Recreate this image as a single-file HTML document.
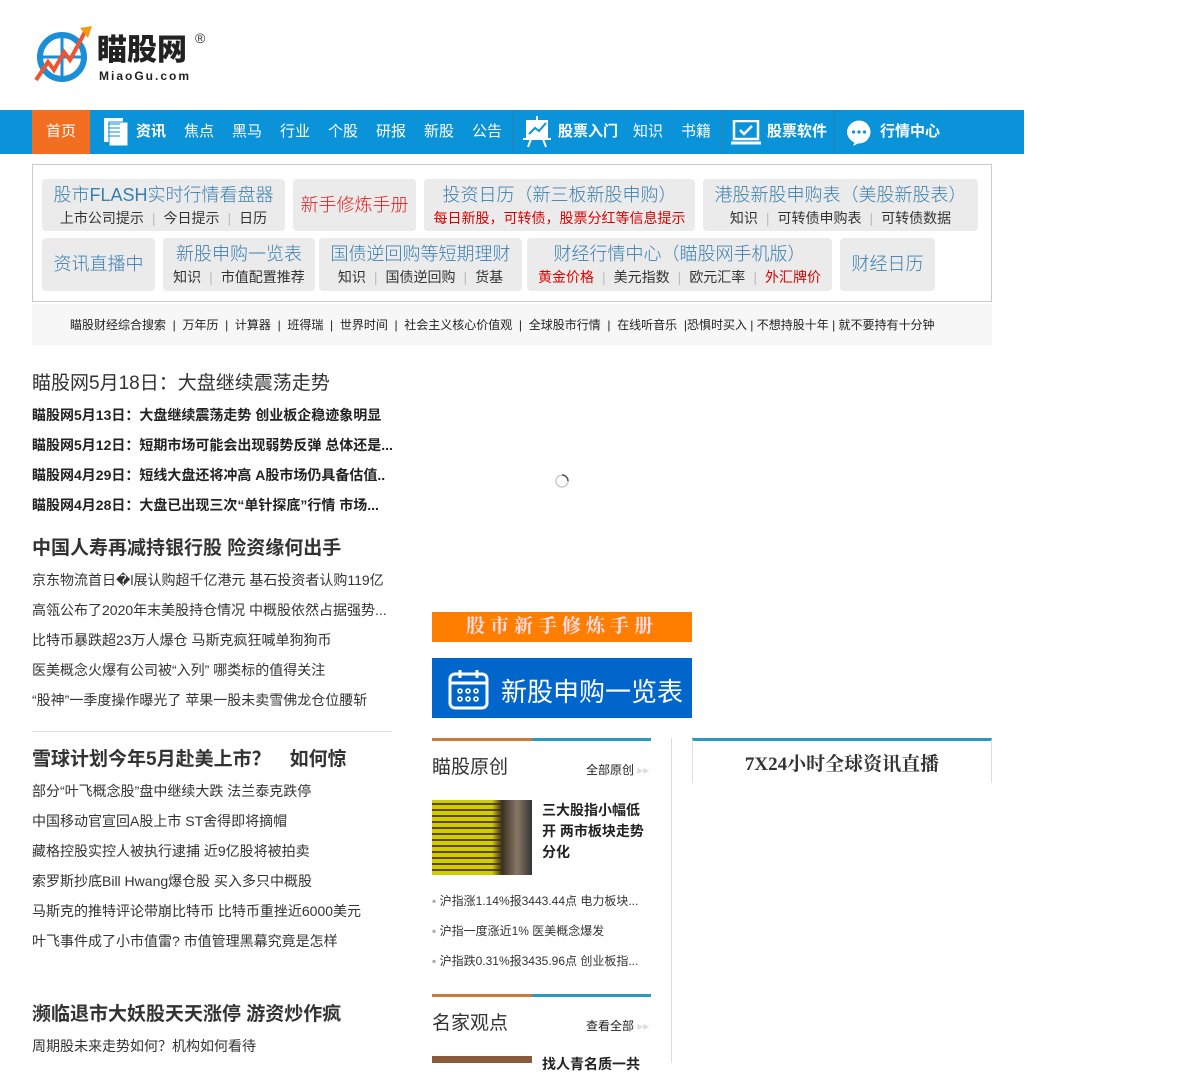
<!DOCTYPE html>
<html><head><meta charset="utf-8"><style>
*{margin:0;padding:0;box-sizing:border-box}
body{width:1200px;height:1063px;overflow:hidden;background:#fff;font-family:"Liberation Sans","Noto Sans CJK SC",sans-serif;color:#333;position:relative}
.a{position:absolute;white-space:nowrap}
.nav{position:absolute;left:0;top:110px;width:1024px;height:44px;background:#0a93d8}
.nav span{position:absolute;top:0;line-height:44px;color:#fff;font-size:15px}
.nav b{position:absolute;top:0;line-height:44px;color:#fff;font-size:15px;font-weight:bold}
.sep{position:absolute;top:0;width:1px;height:44px;background:#2a7fb8}
.btn{position:absolute;background:#ebebeb;border-radius:4px;text-align:center;padding-top:3px}
.btn .t{font-size:18px;color:#3a7fb0;line-height:26px;font-family:"Liberation Sans","Noto Sans CJK SC",sans-serif;font-weight:300}
.btn .s{font-size:14px;color:#333;line-height:20px}
.btn .s i{font-style:normal;color:#bbb;margin:0 8px}
.btn .r,.r{color:#d00}
.h{font-size:19px;font-weight:bold;color:#333;font-family:"Liberation Sans","Noto Sans CJK SC",sans-serif}
.li{font-size:14px;color:#333}
.lb{font-size:14px;font-weight:bold;color:#222}
</style></head><body>
<!-- logo -->
<svg class="a" style="left:32px;top:24px" width="70" height="62" viewBox="0 0 70 62">
<circle cx="30" cy="33" r="22" fill="none" stroke="#1a8ed6" stroke-width="6"/>
<path d="M8 33H52M30 11V55" stroke="#1a8ed6" stroke-width="3"/>
<path d="M4 56L16 38L22 46L32 28L38 36L54 6" fill="none" stroke="#e53" stroke-width="4"/>
<path d="M48 4L60 2L56 14Z" fill="#f39c12"/>
</svg>
<div class="a" style="left:97px;top:33px;font-size:30px;line-height:36px;font-weight:900;color:#222">瞄股网</div>
<div class="a" style="left:195px;top:30px;font-size:14px;color:#333">®</div>
<div class="a" style="left:99px;top:69px;font-size:12px;line-height:14px;font-weight:bold;color:#222;letter-spacing:2px">MiaoGu.com</div>
<!-- nav -->
<div class="nav">
<div style="position:absolute;left:32px;top:0;width:58px;height:44px;background:#f26f21"></div>
<span style="left:46px">首页</span>
<svg style="position:absolute;left:103px;top:7px" width="26" height="30"><rect x="1" y="1" width="19" height="24" fill="#fff"/><rect x="6" y="5" width="19" height="24" fill="#fff" stroke="#0a93d8"/><path d="M5 7h12M5 11h12M5 15h12M5 19h12" stroke="#0a93d8"/></svg>
<b style="left:136px">资讯</b>
<span style="left:184px">焦点</span><span style="left:232px">黑马</span><span style="left:280px">行业</span><span style="left:328px">个股</span><span style="left:376px">研报</span><span style="left:424px">新股</span><span style="left:472px">公告</span>
<div class="sep" style="left:512px"></div>
<svg style="position:absolute;left:523px;top:6px" width="28" height="32"><rect x="3" y="4" width="22" height="18" fill="#fff"/><path d="M6 18l6-6 4 3 7-8" stroke="#0a93d8" stroke-width="2" fill="none"/><path d="M0 23h28M8 23l-3 8M20 23l3 8M14 0v4" stroke="#fff" stroke-width="2"/></svg>
<b style="left:558px">股票入门</b>
<span style="left:633px">知识</span><span style="left:681px">书籍</span>
<div class="sep" style="left:721px"></div>
<svg style="position:absolute;left:731px;top:10px" width="30" height="26"><rect x="3" y="1" width="24" height="18" fill="none" stroke="#fff" stroke-width="2.5"/><path d="M9 10l4 4 8-8" stroke="#fff" stroke-width="2.5" fill="none"/><path d="M0 23h30" stroke="#fff" stroke-width="3"/></svg>
<b style="left:767px">股票软件</b>
<div class="sep" style="left:834px"></div>
<svg style="position:absolute;left:846px;top:10px" width="26" height="26"><path d="M13 1a12 11 0 1 0 0 22l-6 3 2-5" fill="#fff"/><circle cx="13" cy="12" r="11.5" fill="#fff"/><circle cx="7.5" cy="12" r="1.6" fill="#0a93d8"/><circle cx="13" cy="12" r="1.6" fill="#0a93d8"/><circle cx="18.5" cy="12" r="1.6" fill="#0a93d8"/></svg>
<b style="left:880px">行情中心</b>
</div>
<!-- grid box -->
<div class="a" style="left:32px;top:164px;width:960px;height:138px;border:1px solid #ccc"></div>
<div class="btn" style="left:42px;top:179px;width:243px;height:52px"><div class="t">股市FLASH实时行情看盘器</div><div class="s">上市公司提示<i>|</i>今日提示<i>|</i>日历</div></div>
<div class="btn" style="left:293px;top:179px;width:123px;height:52px;padding-top:0"><div class="t" style="color:#d22;line-height:52px">新手修炼手册</div></div>
<div class="btn" style="left:424px;top:179px;width:271px;height:52px"><div class="t">投资日历（新三板新股申购）</div><div class="s r">每日新股，可转债，股票分红等信息提示</div></div>
<div class="btn" style="left:703px;top:179px;width:275px;height:52px"><div class="t">港股新股申购表（美股新股表）</div><div class="s">知识<i>|</i>可转债申购表<i>|</i>可转债数据</div></div>
<div class="btn" style="left:42px;top:238px;width:113px;height:53px;padding-top:0"><div class="t" style="line-height:53px">资讯直播中</div></div>
<div class="btn" style="left:163px;top:238px;width:152px;height:53px"><div class="t">新股申购一览表</div><div class="s">知识<i>|</i>市值配置推荐</div></div>
<div class="btn" style="left:319px;top:238px;width:203px;height:53px"><div class="t">国债逆回购等短期理财</div><div class="s">知识<i>|</i>国债逆回购<i>|</i>货基</div></div>
<div class="btn" style="left:527px;top:238px;width:305px;height:53px"><div class="t">财经行情中心（瞄股网手机版）</div><div class="s"><span class="r">黄金价格</span><i>|</i>美元指数<i>|</i>欧元汇率<i>|</i><span class="r">外汇牌价</span></div></div>
<div class="btn" style="left:840px;top:238px;width:95px;height:53px;padding-top:0"><div class="t" style="line-height:53px">财经日历</div></div>
<!-- search links -->
<div class="a" style="left:32px;top:304px;width:960px;height:41px;background:#f7f7f7"></div>
<div class="a" style="left:70px;top:316px;font-size:12px;color:#222">瞄股财经综合搜索 &nbsp;|&nbsp; 万年历 &nbsp;|&nbsp; 计算器 &nbsp;|&nbsp; 班得瑞 &nbsp;|&nbsp; 世界时间 &nbsp;|&nbsp; 社会主义核心价值观 &nbsp;|&nbsp; 全球股市行情 &nbsp;|&nbsp; 在线听音乐 &nbsp;|恐惧时买入 | 不想持股十年 | 就不要持有十分钟</div>
<!-- left column -->
<div class="a h" style="left:32px;top:368px;font-weight:normal">瞄股网5月18日：大盘继续震荡走势</div>
<div class="a lb" style="left:32px;top:405px">瞄股网5月13日：大盘继续震荡走势 创业板企稳迹象明显</div>
<div class="a lb" style="left:32px;top:435px;width:360px;overflow:hidden">瞄股网5月12日：短期市场可能会出现弱势反弹 总体还是...</div>
<div class="a lb" style="left:32px;top:465px">瞄股网4月29日：短线大盘还将冲高 A股市场仍具备估值..</div>
<div class="a lb" style="left:32px;top:495px">瞄股网4月28日：大盘已出现三次“单针探底”行情 市场...</div>
<div class="a h" style="left:32px;top:533px">中国人寿再减持银行股 险资缘何出手</div>
<div class="a li" style="left:32px;top:570px;width:360px;overflow:hidden">京东物流首日�l展认购超千亿港元 基石投资者认购119亿</div>
<div class="a li" style="left:32px;top:600px">高瓴公布了2020年末美股持仓情况 中概股依然占据强势...</div>
<div class="a li" style="left:32px;top:630px">比特币暴跌超23万人爆仓 马斯克疯狂喊单狗狗币</div>
<div class="a li" style="left:32px;top:660px">医美概念火爆有公司被“入列” 哪类标的值得关注</div>
<div class="a li" style="left:32px;top:690px">“股神”一季度操作曝光了 苹果一股未卖雪佛龙仓位腰斩</div>
<div class="a" style="left:32px;top:731px;width:360px;height:1px;background:#ddd"></div>
<div class="a h" style="left:32px;top:744px">雪球计划今年5月赴美上市？　如何惊</div>
<div class="a li" style="left:32px;top:781px">部分“叶飞概念股”盘中继续大跌 法兰泰克跌停</div>
<div class="a li" style="left:32px;top:811px">中国移动官宣回A股上市 ST舍得即将摘帽</div>
<div class="a li" style="left:32px;top:841px">藏格控股实控人被执行逮捕 近9亿股将被拍卖</div>
<div class="a li" style="left:32px;top:871px">索罗斯抄底Bill Hwang爆仓股 买入多只中概股</div>
<div class="a li" style="left:32px;top:901px">马斯克的推特评论带崩比特币 比特币重挫近6000美元</div>
<div class="a li" style="left:32px;top:931px">叶飞事件成了小市值雷? 市值管理黑幕究竟是怎样</div>
<div class="a h" style="left:32px;top:999px">濒临退市大妖股天天涨停 游资炒作疯</div>
<div class="a li" style="left:32px;top:1036px">周期股未来走势如何？机构如何看待</div>
<!-- middle -->
<svg class="a" style="left:554px;top:473px" width="16" height="16"><circle cx="8" cy="8" r="6" fill="none" stroke="#ccc" stroke-width="1.5"/><path d="M8 2a6 6 0 0 1 6 6" stroke="#555" stroke-width="1.5" fill="none"/></svg>
<div class="a" style="left:432px;top:612px;width:260px;height:30px;background:#ff7e00;color:#fde;font-size:19px;line-height:30px;text-align:center;letter-spacing:5px;font-family:'Liberation Serif','Noto Serif CJK SC',serif;font-weight:bold">股市新手修炼手册</div>
<div class="a" style="left:432px;top:658px;width:260px;height:60px;background:#0066cc"></div>
<svg class="a" style="left:448px;top:668px" width="42" height="42"><rect x="2" y="6" width="37" height="34" rx="5" fill="none" stroke="#fff" stroke-width="3"/><path d="M2 15h37M12 2v8M29 2v8" stroke="#fff" stroke-width="3"/><g fill="none" stroke="#fff" stroke-width="1.6"><circle cx="12" cy="23" r="2"/><circle cx="20" cy="23" r="2"/><circle cx="28" cy="23" r="2"/><circle cx="12" cy="31" r="2"/><circle cx="20" cy="31" r="2"/><circle cx="28" cy="31" r="2"/></g></svg>
<div class="a" style="left:501px;top:672px;font-size:26px;color:#fff">新股申购一览表</div>
<div class="a" style="left:432px;top:738px;width:100px;height:3px;background:#d07a3a"></div>
<div class="a" style="left:532px;top:738px;width:119px;height:3px;background:#2a9ac0"></div>
<div class="a" style="left:432px;top:752px;font-size:19px;color:#333">瞄股原创</div>
<div class="a" style="left:586px;top:761px;font-size:12px;color:#222">全部原创 <span style="color:#ddd">▸▸</span></div>
<div class="a" style="left:671px;top:738px;width:1px;height:325px;background:#ddd"></div>
<div class="a" style="left:432px;top:800px;width:100px;height:75px;background:repeating-linear-gradient(0deg,#c8d000 0 4px,#704000 4px 6px),#c80;"></div>
<div class="a" style="left:432px;top:800px;width:100px;height:75px;background:linear-gradient(90deg,transparent 60%,#3a3020 70%,#887766 85%,#333 100%)"></div>
<div class="a" style="left:542px;top:800px;font-size:14px;font-weight:bold;color:#222;line-height:21px;white-space:normal;width:110px">三大股指小幅低开 两市板块走势分化</div>
<div class="a" style="left:432px;top:892px;font-size:12px;color:#333"><span style="color:#aaa">▪</span> 沪指涨1.14%报3443.44点 电力板块...</div>
<div class="a" style="left:432px;top:922px;font-size:12px;color:#333"><span style="color:#aaa">▪</span> 沪指一度涨近1% 医美概念爆发</div>
<div class="a" style="left:432px;top:952px;font-size:12px;color:#333"><span style="color:#aaa">▪</span> 沪指跌0.31%报3435.96点 创业板指...</div>
<div class="a" style="left:432px;top:994px;width:100px;height:3px;background:#d07a3a"></div>
<div class="a" style="left:532px;top:994px;width:119px;height:3px;background:#2a9ac0"></div>
<div class="a" style="left:432px;top:1008px;font-size:19px;color:#333">名家观点</div>
<div class="a" style="left:586px;top:1017px;font-size:12px;color:#222">查看全部 <span style="color:#ddd">▸▸</span></div>
<div class="a" style="left:432px;top:1056px;width:100px;height:7px;background:#8a5a3a"></div>
<div class="a" style="left:542px;top:1054px;font-size:14px;font-weight:bold;color:#222">找人青名质一共</div>
<!-- right -->
<div class="a" style="left:692px;top:738px;width:300px;height:45px;border:1px solid #ddd;border-top:3px solid #2a9ac0;border-bottom:none"></div>
<div class="a" style="left:692px;top:749px;width:300px;text-align:center;font-size:19px;font-weight:bold;color:#333;font-family:'Liberation Serif','Noto Serif CJK SC',serif">7X24小时全球资讯直播</div>
</body></html>
